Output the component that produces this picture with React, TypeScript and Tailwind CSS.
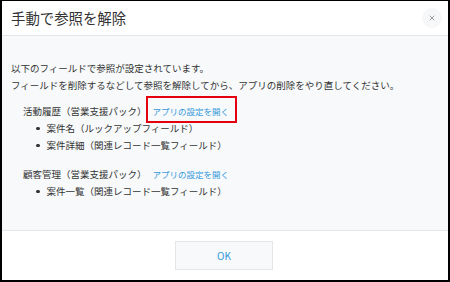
import { X } from "lucide-react";

const font = { fontFamily: '"Noto Sans CJK JP", "Noto Sans", sans-serif' };

interface AppRefProps {
  name: string;
  fields: string[];
  highlight?: boolean;
}

function AppRef({ name, fields, highlight }: AppRefProps) {
  return (
    <div className="flex flex-col">
      <div className="flex h-[18px] items-center pl-[12px]">
        <span className="text-[9.5px] text-[#333]">{name}</span>
        <span className="relative ml-[6px] text-[8.5px] text-[#3498db]">
          アプリの設定を開く
          {highlight && (
            <span className="absolute -top-[9px] -bottom-[6px] -left-[7px] -right-[8px] border-2 border-[#e5000f]" />
          )}
        </span>
      </div>
      <ul className="flex flex-col">
        {fields.map((f) => (
          <li key={f} className="flex h-[17px] items-center pl-[25px] text-[9.5px] text-[#333]">
            <span className="mr-[7px] h-[3.5px] w-[3.5px] rounded-full bg-[#333]" />
            {f}
          </li>
        ))}
      </ul>
    </div>
  );
}

export default function App() {
  return (
    <div
      style={font}
      className="flex h-[282px] w-[450px] flex-col border-2 border-t border-black bg-white"
    >
      <header className="flex h-[35px] shrink-0 items-center justify-between border-b border-[#e3e7e8] pl-[9px] pr-[6px]">
        <h1 className="text-[14.4px] text-[#333]">手動で参照を解除</h1>
        <button className="flex h-[20px] w-[20px] items-center justify-center rounded-full bg-[#f5f7f8] text-[#888]">
          <X size={8} strokeWidth={2.5} />
        </button>
      </header>

      <main className="flex flex-1 flex-col bg-[#f7f9fa] pl-[9px] pt-[24px]">
        <p className="text-[9.5px] leading-[17px] text-[#333]">
          以下のフィールドで参照が設定されています。
          <br />
          フィールドを削除するなどして参照を解除してから、アプリの削除をやり直してください。
        </p>
        <div className="mt-[8px] flex flex-col gap-[11px]">
          <AppRef
            name="活動履歴（営業支援パック）"
            fields={["案件名（ルックアップフィールド）", "案件詳細（関連レコード一覧フィールド）"]}
            highlight
          />
          <AppRef name="顧客管理（営業支援パック）" fields={["案件一覧（関連レコード一覧フィールド）"]} />
        </div>
      </main>

      <footer className="flex h-[50px] shrink-0 items-center justify-center border-t border-[#e3e7e8] bg-white pr-[2px]">
        <button className="flex h-[29px] w-[98px] items-center justify-center border border-[#e3e7e8] bg-[#f7f9fa] text-[10px] text-[#3498db]">
          OK
        </button>
      </footer>
    </div>
  );
}
